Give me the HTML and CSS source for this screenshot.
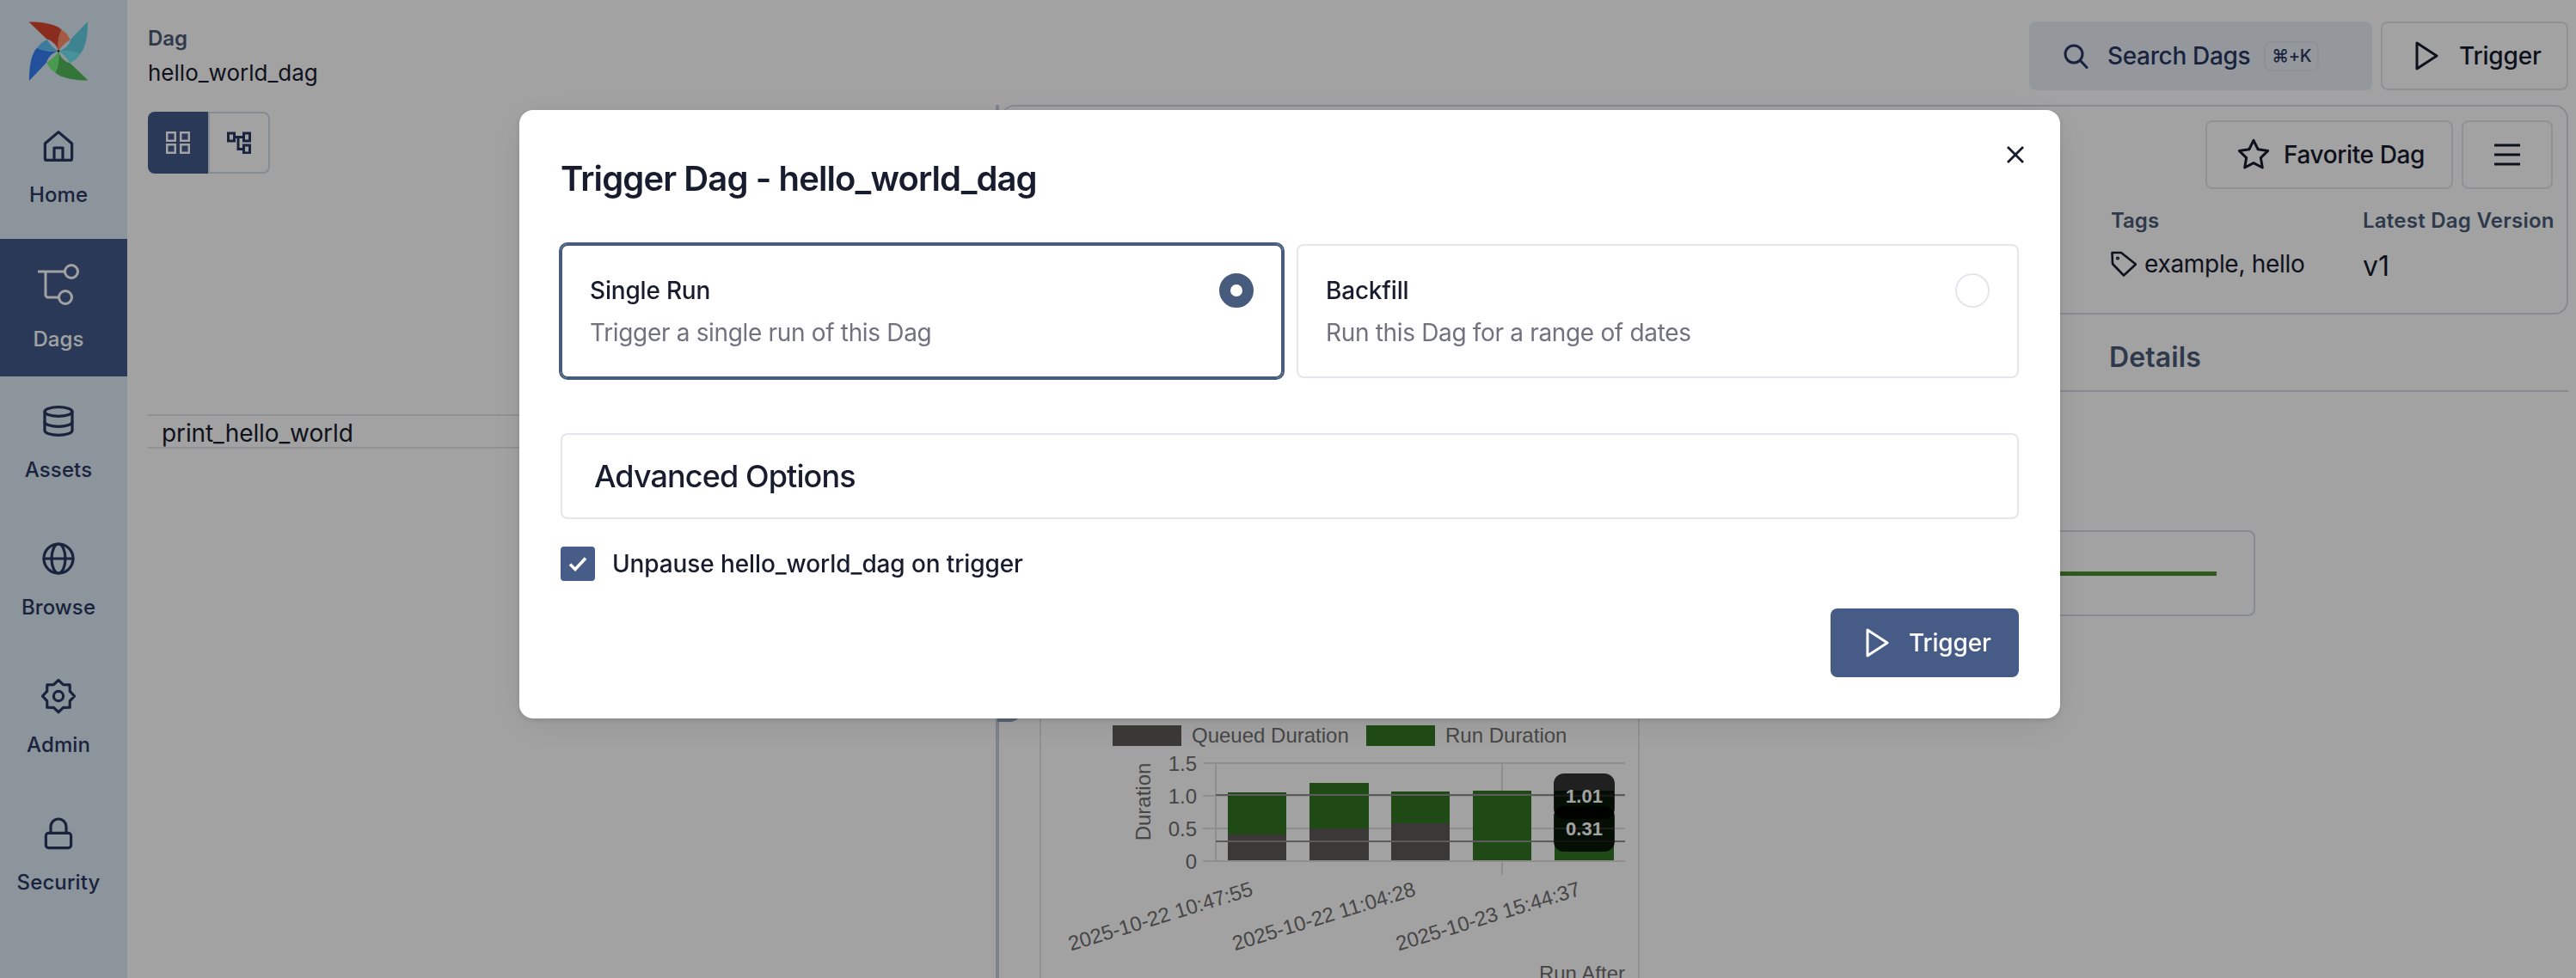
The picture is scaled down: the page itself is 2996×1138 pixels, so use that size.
FILE: index.html
```html
<!DOCTYPE html>
<html lang="en">
<head>
<meta charset="utf-8">
<title>Trigger Dag - hello_world_dag</title>
<link rel="stylesheet" href="styles.css">
</head>
<body>
<div class="app">
  <nav class="sidebar">
    <div class="logo">
      <svg width="70" height="71" viewBox="0 0 72 71">
        <g id="blade-set">
          <g>
            <path fill="#da4832" d="M.5.5C14 .5 32 2 40 10c-4 6-5 15-4 25.5C34 28 29 23 22 21Z"/>
            <path fill="#ff8e68" d="M40 10c5 3 8 7 10 12-6 3-11 8-14 13.500C35 25 36 16 40 10Z"/>
          </g>
          <g transform="rotate(90 36 35.500)">
            <path fill="#60d0e3" d="M.5.5C14 .5 32 2 40 10c-4 6-5 15-4 25.5C34 28 29 23 22 21Z"/>
            <path fill="#6ce8f4" d="M40 10c5 3 8 7 10 12-6 3-11 8-14 13.500C35 25 36 16 40 10Z"/>
          </g>
          <g transform="rotate(180 36 35.500)">
            <path fill="#52b85b" d="M.5.5C14 .5 32 2 40 10c-4 6-5 15-4 25.5C34 28 29 23 22 21Z"/>
            <path fill="#74f27b" d="M40 10c5 3 8 7 10 12-6 3-11 8-14 13.500C35 25 36 16 40 10Z"/>
          </g>
          <g transform="rotate(270 36 35.500)">
            <path fill="#367ef6" d="M.5.5C14 .5 32 2 40 10c-4 6-5 15-4 25.5C34 28 29 23 22 21Z"/>
            <path fill="#60c4f8" d="M40 10c5 3 8 7 10 12-6 3-11 8-14 13.500C35 25 36 16 40 10Z"/>
          </g>
        </g>
        <circle cx="36" cy="35.500" r="1.400" fill="#1c2540"/>
      </svg>
    </div>
    <a class="nav-item">
      <svg class="nav-icon" viewBox="0 0 24 24"><path d="M4.200 10.500 12 3.800l7.800 6.700v8.700a1 1 0 0 1-1 1H5.200a1 1 0 0 1-1-1z"/><path d="M9.500 20v-7h5v7"/></svg>
      <span>Home</span>
    </a>
    <a class="nav-item active">
      <svg class="nav-icon" viewBox="0 0 48 48"><path class="thick" d="M0 9h31M9 9v27a3 3 0 0 0 3 3h12"/><circle class="thick" cx="39" cy="9" r="7.500"/><circle class="thick" cx="32" cy="39" r="7.500"/></svg>
      <span>Dags</span>
    </a>
    <a class="nav-item">
      <svg class="nav-icon" viewBox="0 0 24 24"><ellipse cx="12" cy="6.500" rx="8" ry="2.700"/><path d="M4 6.500v11c0 1.500 3.600 2.700 8 2.700s8-1.200 8-2.700v-11"/><path d="M4 12.500c0 1.500 3.600 2.700 8 2.700s8-1.200 8-2.700"/></svg>
      <span>Assets</span>
    </a>
    <a class="nav-item">
      <svg class="nav-icon" viewBox="0 0 24 24"><circle cx="12" cy="12" r="8.500"/><ellipse cx="12" cy="12" rx="4" ry="8.500"/><path d="M3.500 12h17"/></svg>
      <span>Browse</span>
    </a>
    <a class="nav-item">
      <svg class="nav-icon" viewBox="0 0 24 24"><path d="M12 2.700 14.760 5.350 18.580 5.420 18.650 9.240 21.300 12 18.650 14.760 18.580 18.580 14.760 18.650 12 21.300 9.240 18.650 5.420 18.580 5.350 14.760 2.700 12 5.350 9.240 5.420 5.420 9.240 5.350Z"/><circle cx="12" cy="12" r="2.800"/></svg>
      <span>Admin</span>
    </a>
    <a class="nav-item">
      <svg class="nav-icon" viewBox="0 0 24 24"><rect x="4.700" y="11.700" width="14.600" height="8.600" rx="1.500"/><path d="M7.500 11.700V8a4.500 4.500 0 0 1 9 0v3.700"/></svg>
      <span>Security</span>
    </a>
  </nav>

  <main class="main">
    <header class="topbar">
      <div class="crumb">
        <div class="crumb-label">Dag</div>
        <div class="crumb-name">hello_world_dag</div>
      </div>
      <div class="top-actions">
        <button class="search-btn">
          <svg class="search-icon" width="30" height="30" viewBox="0 0 30 30"><circle cx="13" cy="13" r="10"/><path d="M20.500 20.500 28 28.500"/></svg>
          <span>Search Dags</span>
          <kbd class="kbd">⌘+K</kbd>
        </button>
        <button class="outline-btn trigger-top">
          <svg class="play" width="27" height="34" viewBox="0 0 27 34"><path d="M2 2 25 17 2 32Z"/></svg>
          <span>Trigger</span>
        </button>
      </div>
    </header>

    <div class="split">
      <section class="left-pane">
        <div class="toggle">
          <div class="toggle-on">
            <svg width="28" height="26" viewBox="0 0 28 26"><path d="M1.250 1.250h9.500v9.500h-9.500zM17.250 1.250h9.500v9.500h-9.500zM1.250 15.250h9.500v9.500h-9.500zM17.250 15.250h9.500v9.500h-9.500z"/></svg>
          </div>
          <div class="toggle-off">
            <svg width="28" height="26" viewBox="0 0 28 26"><path d="M1.500 2h7v9h-7zM19.500 2h7v9h-7zM19.500 16h7v9h-7zM8.500 6.500h11M13 6.500V20.500h6.500"/></svg>
          </div>
        </div>
        <div class="task-row">print_hello_world</div>
      </section>

      <div class="divider"><span class="divider-knob"></span></div>

      <section class="right-pane">
        <div class="info-card">
          <div class="info-actions">
            <button class="outline-btn favorite">
              <svg class="star" width="40" height="40" viewBox="0 0 24 24"><path d="M12 2 15.090 8.260 22 9.270 17 14.140 18.180 21.020 12 17.770 5.820 21.020 7 14.140 2 9.270 8.910 8.260Z"/></svg>
              <span>Favorite Dag</span>
            </button>
            <button class="outline-btn menu-btn">
              <svg class="bars" width="30" height="26" viewBox="0 0 30 26"><path d="M0 2h30M0 13h30M0 24h30"/></svg>
            </button>
          </div>
          <div class="meta">
            <div class="meta-col tags-col">
              <div class="meta-label">Tags</div>
              <div class="meta-tags">
                <svg class="tag" width="30" height="30" viewBox="0 0 30 30"><path d="M1.500 2H12L29 15.500 15 28.500 2 15Z"/><circle cx="8" cy="8.500" r="0.800"/></svg>
                <span>example, hello</span>
              </div>
            </div>
            <div class="meta-col version-col">
              <div class="meta-label">Latest Dag Version</div>
              <div class="meta-version">v1</div>
            </div>
          </div>
        </div>

        <div class="tabs"><span class="tab">Details</span></div>

        <div class="details">
          <div class="stat-card"><div class="stat-line"></div></div>
          <div class="chart-card">
            <svg class="chart" width="694" height="420" viewBox="1211 739 694 420">
              <g class="bar-dark-legend"><rect x="1294" y="844" width="80" height="24"/></g>
              <text class="tick" x="1386" y="864">Queued Duration</text>
              <g class="bar-green-legend"><rect x="1589" y="844" width="80" height="24"/></g>
              <text class="tick" x="1681" y="864">Run Duration</text>

              <text class="axis-title" transform="translate(1338 933) rotate(-90)" text-anchor="middle">Duration</text>
              <text class="tick" x="1392" y="897" text-anchor="end">1.5</text>
              <text class="tick" x="1392" y="935" text-anchor="end">1.0</text>
              <text class="tick" x="1392" y="973" text-anchor="end">0.5</text>
              <text class="tick" x="1392" y="1011" text-anchor="end">0</text>

              <path class="bar-dark" d="M1428 971h68v31h-68zM1523 964h69v38h-69zM1618 958h68v44h-68zM1713 1001h68v1h-68z"/>
              <path class="bar-green" d="M1428 922h68v49h-68zM1523 911h69v53h-69zM1618 921h68v37h-68zM1713 920h68v81h-68zM1808 920h69v82h-69z"/>
              <path class="grid" d="M1399 888H1890M1399 926H1428M1496 926H1523M1592 926H1618M1686 926H1713M1781 926H1890M1399 964H1428M1496 964H1523M1592 964H1618M1686 964H1713M1781 964H1890M1399 1002H1890M1414 888V1002M1747 888V920M1747 1002V1018"/>
              <path class="cross" d="M1414 925H1890M1414 979H1890"/>

              <rect class="tip" x="1807" y="900" width="71" height="53" rx="12"/>
              <rect class="tip" x="1807" y="938" width="71" height="53" rx="12"/>
              <text class="tip-text" x="1842.500" y="934" text-anchor="middle">1.01</text>
              <text class="tip-text" x="1842.500" y="972" text-anchor="middle">0.31</text>

              <text class="tick" transform="translate(1352 1074) rotate(-17)" text-anchor="middle">2025-10-22 10:47:55</text>
              <text class="tick" transform="translate(1542 1074) rotate(-17)" text-anchor="middle">2025-10-22 11:04:28</text>
              <text class="tick" transform="translate(1733 1074) rotate(-17)" text-anchor="middle">2025-10-23 15:44:37</text>
              <text class="tick" x="1890" y="1141" text-anchor="end">Run After</text>
            </svg>
          </div>
        </div>
      </section>
    </div>
  </main>
</div>

<div class="backdrop">
  <div class="modal" role="dialog">
    <button class="close" aria-label="Close">
      <svg width="22" height="22" viewBox="0 0 22 22"><path d="M2 2 20 20M20 2 2 20"/></svg>
    </button>
    <h2 class="modal-title">Trigger Dag - hello_world_dag</h2>
    <div class="choice-grid">
      <div class="choice selected">
        <div class="choice-text">
          <div class="choice-name">Single Run</div>
          <div class="choice-desc">Trigger a single run of this Dag</div>
        </div>
        <span class="radio on"></span>
      </div>
      <div class="choice">
        <div class="choice-text">
          <div class="choice-name">Backfill</div>
          <div class="choice-desc">Run this Dag for a range of dates</div>
        </div>
        <span class="radio"></span>
      </div>
    </div>
    <div class="advanced">Advanced Options</div>
    <label class="unpause">
      <span class="checkbox">
        <svg width="22" height="18" viewBox="0 0 22 18"><path d="M2 9.500 8 15.500 20 2.500"/></svg>
      </span>
      <span>Unpause hello_world_dag on trigger</span>
    </label>
    <div class="modal-footer">
      <button class="primary-btn">
        <svg class="play" width="27" height="34" viewBox="0 0 27 34"><path d="M2 2 25 17 2 32Z"/></svg>
        <span>Trigger</span>
      </button>
    </div>
  </div>
</div>
</body>
</html>
```
FILE: styles.css
```css
* { box-sizing: border-box; }
html, body { margin: 0; height: 100%; }
body {
  overflow: hidden;
  background: #fff;
  color: #171c2e;
  font-family: "Inter", "DejaVu Sans", sans-serif;
}
button { font: inherit; color: inherit; background: none; border: 0; padding: 0; }

.app { display: flex; height: 1138px; overflow: hidden; }

/* Sidebar */
.sidebar { flex: 0 0 148px; background: #dde9f6; display: flex; flex-direction: column; }
.logo { height: 118px; padding: 24px 0 0 33px; }
.logo svg { display: block; }
.nav-item {
  height: 160px;
  padding: 28px 12px 0 0;
  display: flex;
  flex-direction: column;
  align-items: center;
  gap: 13px;
  color: #2a3860;
  font-size: 24px;
  line-height: 40px;
  font-weight: 500;
  letter-spacing: 0.1px;
}
.nav-item.active { background: #425b8b; color: #fff; padding-top: 29px; gap: 20px; }
.nav-icon { width: 48px; height: 48px; fill: none; stroke: currentColor; stroke-width: 1.600; stroke-linejoin: round; stroke-linecap: round; }
.nav-icon .thick { stroke-width: 3; }

/* Main */
.main { flex: 1; min-width: 0; display: flex; flex-direction: column; padding: 0 9px 0 24px; }
.topbar { height: 122px; display: flex; justify-content: space-between; padding-top: 25px; }
.crumb { padding-top: 4px; }
.crumb-label { font-size: 24px; line-height: 32px; font-weight: 600; color: #4a5b78; }
.crumb-name { font-size: 26px; line-height: 40px; margin-top: 4px; }
.top-actions { display: flex; gap: 10px; height: 80px; }
.search-btn {
  width: 399px;
  background: #e9eff7;
  border-radius: 8px;
  display: flex;
  align-items: center;
  padding-left: 39px;
  font-size: 28px;
  font-weight: 500;
  letter-spacing: -0.35px;
  color: #2a3860;
}
.search-icon { fill: none; stroke: currentColor; stroke-width: 3; stroke-linecap: round; margin-right: 22px; }
.kbd {
  margin-left: 16px;
  width: 64px;
  height: 35px;
  border: 2px solid #dde5ef;
  border-radius: 8px;
  display: flex;
  align-items: center;
  justify-content: center;
  font: 500 20px "Inter", "DejaVu Sans", sans-serif;
}
.outline-btn {
  display: flex;
  align-items: center;
  height: 80px;
  border: 2px solid #e1e4ea;
  border-radius: 8px;
  font-size: 28px;
  font-weight: 500;
  letter-spacing: -0.2px;
}
.trigger-top { width: 218px; padding-left: 38px; gap: 24px; }
.play { fill: none; stroke: currentColor; stroke-width: 3; stroke-linejoin: round; }

.split { flex: 1; min-height: 0; display: flex; }
.left-pane { flex: 0 0 986px; padding-top: 8px; }
.toggle { display: flex; width: 142px; height: 72px; }
.toggle-on, .toggle-off { display: flex; align-items: center; justify-content: center; }
.toggle-on { flex: 0 0 70px; background: #425b8b; border-radius: 8px 0 0 8px; }
.toggle-on svg { fill: none; stroke: #fff; stroke-width: 2.500; }
.toggle-off { flex: 1; border: 2px solid #d4dae5; border-radius: 0 8px 8px 0; }
.toggle-off svg { fill: none; stroke: #2a3860; stroke-width: 3; }
.task-row {
  margin-top: 280px;
  height: 40px;
  border-top: 2px solid #e1e4ea;
  border-bottom: 2px solid #e1e4ea;
  padding-left: 16px;
  font-size: 28px;
  line-height: 40px;
  letter-spacing: -0.1px;
  white-space: nowrap;
}

.divider { position: relative; flex: 0 0 4px; background: #c8d0da; }
.divider-knob {
  position: absolute;
  left: 2px;
  top: 678px;
  width: 30px;
  height: 40px;
  background: #8ea0bd;
  border-radius: 0 0 16px 0;
}

.right-pane { flex: 1; min-width: 0; padding-left: 2px; }
.info-card { height: 244px; border: 2px solid #d5d9e0; border-radius: 16px; padding: 16px 16px 0 0; }
.info-actions { display: flex; justify-content: flex-end; gap: 10px; }
.favorite { width: 288px; padding-left: 32px; gap: 15px; letter-spacing: -0.4px; }
.star { fill: none; stroke: currentColor; stroke-width: 1.800; stroke-linejoin: round; margin-left: 2px; }
.menu-btn { width: 106px; justify-content: center; }
.bars { fill: none; stroke: currentColor; stroke-width: 3; }
.meta { display: flex; justify-content: flex-end; margin-top: 21px; }
.meta-col { width: 293px; }
.version-col { width: 221px; }
.meta-label { font-size: 24px; line-height: 32px; font-weight: 600; color: #4a5b78; white-space: nowrap; }
.version-col .meta-label { letter-spacing: 0.25px; }
.meta-tags { display: flex; align-items: center; gap: 9px; margin-top: 16px; font-size: 28px; line-height: 36px; letter-spacing: -0.3px; }
.tag { fill: none; stroke: currentColor; stroke-width: 2.600; stroke-linejoin: round; }
.meta-version { font-size: 32px; line-height: 40px; margin-top: 17px; }

.tabs { height: 90px; border-bottom: 2px solid #d5d9e0; padding: 30px 0 0 1289px; }
.tab { display: block; font-size: 32px; line-height: 40px; font-weight: 600; letter-spacing: 0.1px; color: #4a5b78; }

.details { padding-left: 45px; }
.stat-card {
  width: 1414px;
  height: 100px;
  margin-top: 161px;
  border: 2px solid #d5d9e0;
  border-radius: 8px;
  display: flex;
  align-items: center;
  padding-left: 41px;
}
.stat-line { width: 1326px; height: 5px; background: #4a8c2e; }
.chart-card { width: 698px; height: 460px; margin-top: 20px; border: 2px solid #e1e4ea; }
.chart { display: block; font-family: "Liberation Sans", Arial, sans-serif; }
.chart text { font-size: 24px; }
.tick, .axis-title { fill: #6f6f6f; }
.grid { fill: none; stroke: #e0e0e0; stroke-width: 2; }
.bar-dark, .bar-dark-legend { fill: #5c5b57; }
.bar-green, .bar-green-legend { fill: #317521; }
.tip { fill: rgba(0, 0, 0, 0.8); }
.cross { fill: none; stroke: #8f8f8f; stroke-width: 2; }
.chart .tip-text { fill: #fff; font-size: 22px; font-weight: 700; }

/* Modal layer */
.backdrop {
  position: fixed;
  inset: 0;
  background: rgba(0, 0, 0, 0.365);
  display: flex;
  justify-content: center;
  align-items: flex-start;
  padding: 128px 0 0 4px;
}
.modal {
  position: relative;
  width: 1792px;
  height: 708px;
  background: #fff;
  border-radius: 16px;
  padding: 48px;
  box-shadow: 0 8px 40px rgba(0, 0, 0, 0.08), 0 2px 6px rgba(0, 0, 0, 0.12);
}
.close { position: absolute; top: 41px; right: 41px; width: 22px; height: 22px; display: flex; }
.close svg { fill: none; stroke: #171c2e; stroke-width: 2.800; }
.modal-title { margin: 0; font-size: 40px; line-height: 64px; font-weight: 600; letter-spacing: -0.9px; }
.choice-grid { display: grid; grid-template-columns: 1fr 1fr; gap: 16px; margin-top: 44px; }
.choice {
  height: 156px;
  border: 2px solid #e4e6ec;
  border-radius: 8px;
  padding: 32px;
  display: flex;
  justify-content: space-between;
  align-items: flex-start;
}
.choice.selected { border-color: #475c7c; outline: 2px solid #475c7c; }
.choice-name { font-size: 28px; line-height: 40px; font-weight: 500; letter-spacing: -0.2px; }
.choice-desc { font-size: 28px; line-height: 40px; margin-top: 9px; color: #71717f; letter-spacing: -0.33px; }
.radio { width: 40px; height: 40px; border: 2px solid #e4e6ec; border-radius: 50%; }
.radio.on { border: 13px solid #475c7c; }
.advanced {
  margin-top: 64px;
  height: 100px;
  border: 2px solid #e4e6ec;
  border-radius: 8px;
  padding-left: 37px;
  display: flex;
  align-items: center;
  font-size: 36px;
  font-weight: 500;
  letter-spacing: -0.9px;
}
.unpause { display: flex; align-items: center; gap: 20px; margin-top: 32px; font-size: 28px; font-weight: 500; letter-spacing: -0.11px; }
.checkbox { width: 40px; height: 40px; background: #475d87; border-radius: 4px; display: flex; align-items: center; justify-content: center; }
.checkbox svg { fill: none; stroke: #fff; stroke-width: 3.500; }
.modal-footer { display: flex; justify-content: flex-end; margin-top: 32px; }
.primary-btn {
  width: 219px;
  height: 80px;
  background: #465c87;
  color: #fff;
  border-radius: 8px;
  display: flex;
  align-items: center;
  padding-left: 41px;
  gap: 23px;
  font-size: 28px;
  font-weight: 500;
  letter-spacing: -0.2px;
}
```
